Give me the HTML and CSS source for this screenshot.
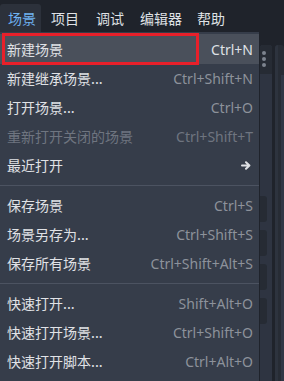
FILE: index.html
```html
<!DOCTYPE html>
<html lang="zh">
<head>
<meta charset="utf-8">
<link rel="stylesheet" href="styles.css">
</head>
<body>
<div class="app">
  <div class="menubar">
    <div class="mb-item active">场景</div>
    <div class="mb-item">项目</div>
    <div class="mb-item">调试</div>
    <div class="mb-item">编辑器</div>
    <div class="mb-item">帮助</div>
  </div>
  <div class="main">
    <div class="popup">
      <div class="item hover marked"><span class="label">新建场景</span><span class="sc sc-hl">Ctrl+N</span></div>
      <div class="item"><span class="label">新建继承场景...</span><span class="sc">Ctrl+Shift+N</span></div>
      <div class="item"><span class="label">打开场景...</span><span class="sc">Ctrl+O</span></div>
      <div class="item disabled"><span class="label">重新打开关闭的场景</span><span class="sc">Ctrl+Shift+T</span></div>
      <div class="item"><span class="label">最近打开</span>
        <svg class="arrow" width="10" height="9" viewBox="0 0 10 9"><path d="M1 4.5H8M5 1.2L8.4 4.5L5 7.8" fill="none" stroke="#dfe1e5" stroke-width="2" stroke-linecap="round" stroke-linejoin="round"/></svg>
      </div>
      <div class="sep"></div>
      <div class="item"><span class="label">保存场景</span><span class="sc">Ctrl+S</span></div>
      <div class="item"><span class="label">场景另存为...</span><span class="sc">Ctrl+Shift+S</span></div>
      <div class="item"><span class="label">保存所有场景</span><span class="sc">Ctrl+Shift+Alt+S</span></div>
      <div class="sep"></div>
      <div class="item"><span class="label">快速打开...</span><span class="sc">Shift+Alt+O</span></div>
      <div class="item"><span class="label">快速打开场景...</span><span class="sc">Ctrl+Shift+O</span></div>
      <div class="item"><span class="label">快速打开脚本...</span><span class="sc">Ctrl+Alt+O</span></div>
    </div>
    <div class="side">
      <div class="panel p1">
        <div class="p1-head">
          <span class="dot"></span><span class="dot"></span><span class="dot"></span>
        </div>
        <div class="p1-body">
          <div class="slot"></div>
          <div class="slot"></div>
          <div class="slot"></div>
          <div class="slot"></div>
        </div>
      </div>
      <div class="panel p2">
        <div class="p2-a"></div>
        <div class="p2-b"></div>
      </div>
    </div>
  </div>
</div>
</body>
</html>
```
FILE: styles.css
```css
html, body {
  margin: 0;
  padding: 0;
}
body {
  width: 284px;
  height: 381px;
  overflow: hidden;
  background: #1f232b;
  font-family: "Noto Sans", "Noto Sans CJK SC", sans-serif;
  font-size: 14px;
  color: #dfe1e5;
}
.app {
  display: flex;
  flex-direction: column;
  height: 381px;
}
.menubar {
  display: flex;
  height: 32px;
  padding-top: 4px;
  box-sizing: border-box;
}
.mb-item {
  padding: 0 8px;
  height: 28px;
  line-height: 28px;
  font-family: "Noto Sans CJK SC", sans-serif;
  color: #dfe1e5;
  white-space: nowrap;
  flex: none;
}
.mb-item.active {
  background: #2c313b;
  color: #70b3f2;
  border-radius: 3px 3px 0 0;
  padding: 0 5px 0 8px;
}
.mb-item:nth-child(2) { margin-left: 2px; }
.mb-item:nth-child(3) { margin-left: 1px; }
.mb-item:nth-child(4) { margin-left: 0; }
.mb-item:nth-child(5) { margin-left: -1px; }
.main {
  flex: 1;
  display: flex;
  min-height: 0;
}
.popup {
  width: 259px;
  background: #363d4a;
  padding-top: 3px;
  box-sizing: border-box;
  flex: none;
}
.item {
  position: relative;
  height: 29px;
  display: flex;
  align-items: center;
  justify-content: space-between;
  padding: 0 6px 0 7px;
  white-space: nowrap;
}
.label {
  font-family: "Noto Sans CJK SC", sans-serif;
  color: #e0e2e6;
  line-height: 29px;
}
.sc {
  font-family: "Noto Sans", sans-serif;
  color: #8d929b;
}
.sc-hl {
  color: #dfe1e5;
}
.item.hover {
  background: #4a505b;
  height: 30px;
  margin-top: -1px;
}
.item.marked::after {
  content: "";
  position: absolute;
  left: 2px;
  top: -1px;
  width: 197px;
  height: 32px;
  box-sizing: border-box;
  border: 3px solid #e8202a;
}
.item.disabled .label,
.item.disabled .sc {
  color: #6f7580;
}
.arrow {
  margin-right: 2px;
}
.sep {
  height: 11px;
  display: flex;
  align-items: center;
}
.sep::before {
  content: "";
  flex: 1;
  height: 1px;
  background: #4c5361;
}
.side {
  flex: 1;
  display: flex;
  padding-top: 13px;
  gap: 3px;
  padding-left: 1px;
}
.panel {
  border-radius: 3px 3px 0 0;
  overflow: hidden;
  display: flex;
  flex-direction: column;
}
.p1 {
  width: 12px;
  background: #2e3441;
}
.p1-head {
  height: 29px;
  background: #262b34;
  display: flex;
  flex-direction: column;
  align-items: flex-start;
  padding: 6px 0 0 2px;
  box-sizing: border-box;
  gap: 2px;
}
.dot {
  width: 4px;
  height: 4px;
  border-radius: 50%;
  background: #7d838e;
}
.p1-body {
  flex: 1;
  display: flex;
  flex-direction: column;
  gap: 8px;
  padding-top: 122px;
}
.slot {
  width: 7px;
  height: 26px;
  background: #262b34;
  border-radius: 0 3px 3px 0;
}
.p2 {
  flex: 1;
  flex-direction: row;
  background: #272c35;
}
.p2-a {
  width: 3px;
  background: #2d333e;
}
.p2-b {
  flex: 1;
  margin-left: 3px;
  background: #303745;
  margin-top: 30px;
}
```
